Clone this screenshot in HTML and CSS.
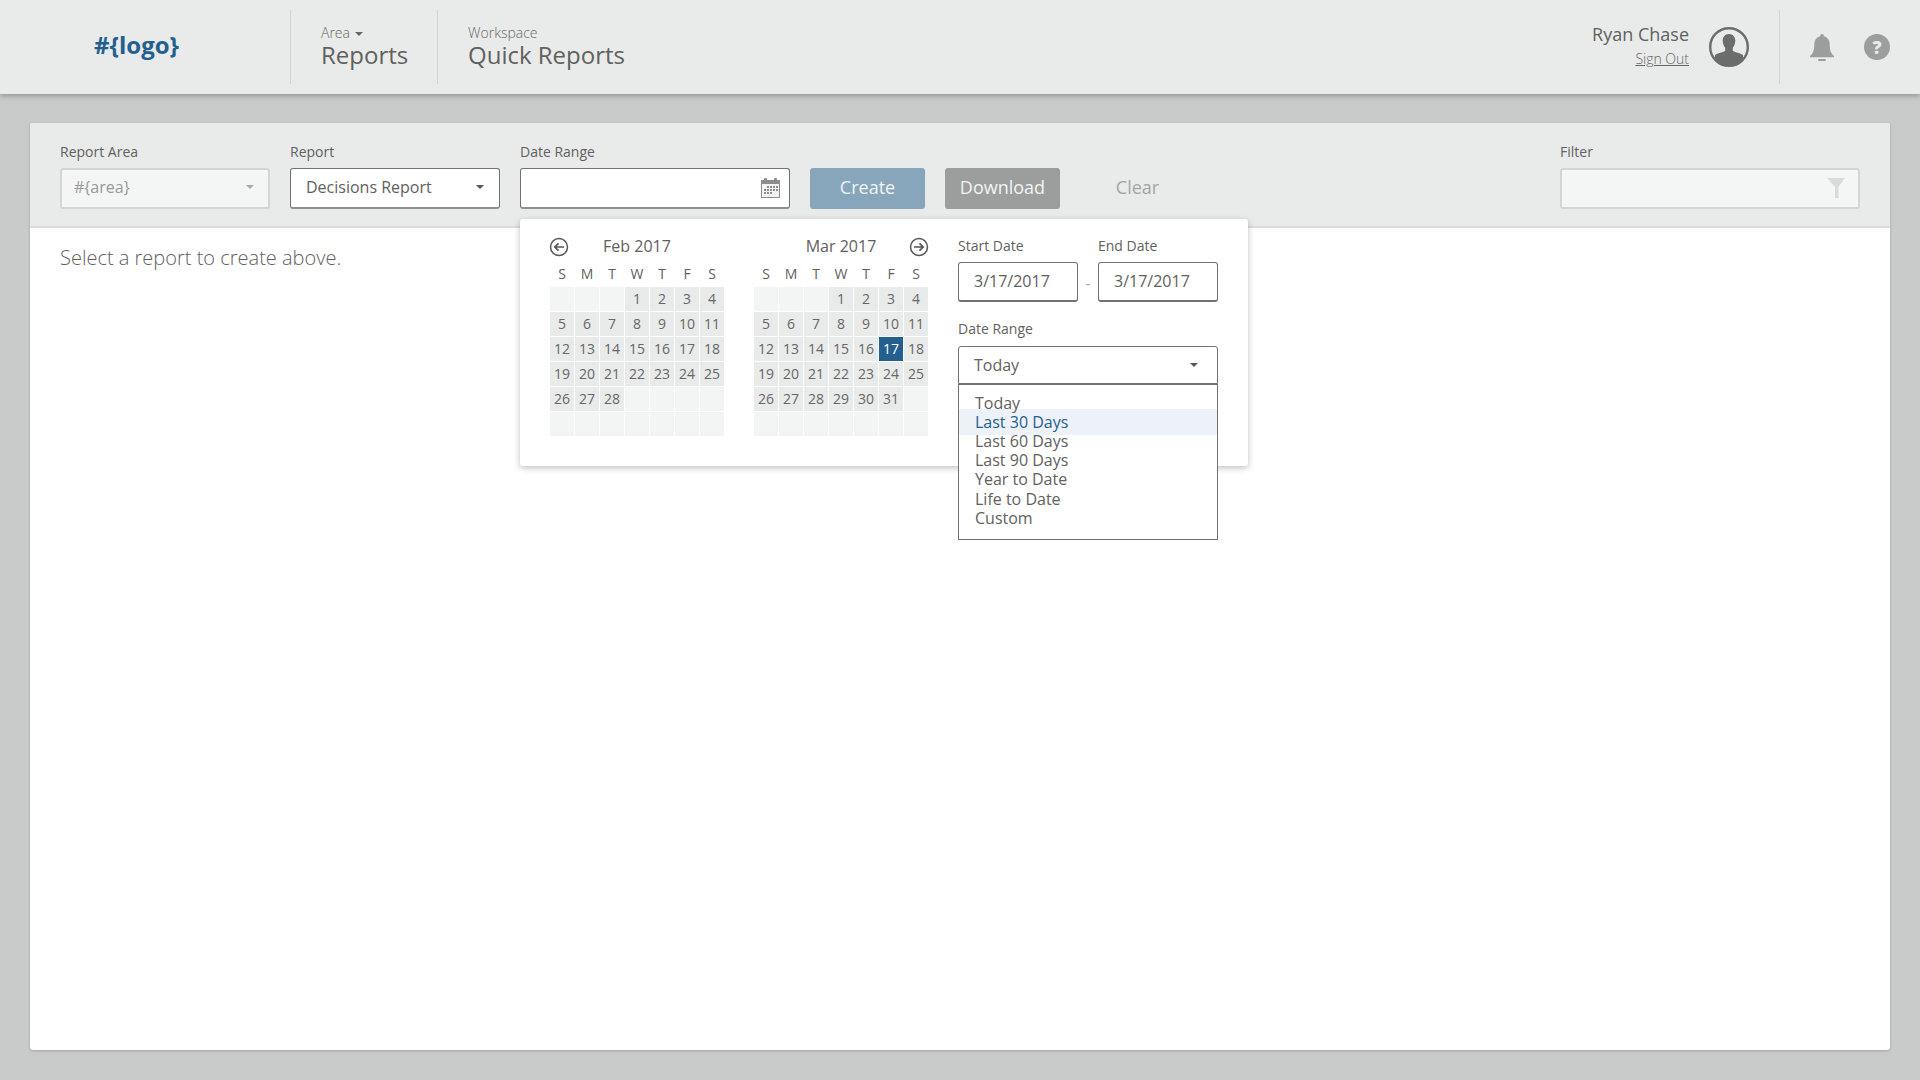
FILE: index.html
```html
<!DOCTYPE html>
<html lang="en">
<head>
    <meta charset="UTF-8">
    <title>Quick Reports</title>
    <link rel="stylesheet" href="styles.css">
</head>
<body>
<header class="topbar">
    <div class="logo">#{logo}</div>
    <div class="crumb crumb-area">
        <div class="crumb-label">Area <span class="caret caret-small"></span></div>
        <div class="crumb-title">Reports</div>
    </div>
    <div class="crumb crumb-workspace">
        <div class="crumb-label">Workspace</div>
        <div class="crumb-title">Quick Reports</div>
    </div>
    <div class="user">
        <div class="user-name">Ryan Chase</div>
        <a class="sign-out" href="#">Sign Out</a>
    </div>
    <svg class="avatar" width="40" height="40" viewBox="0 0 40 40">
        <defs><clipPath id="avatarClip"><circle cx="20" cy="20" r="18.5"/></clipPath></defs>
        <circle cx="20" cy="20" r="18.8" fill="none" stroke="#6b6d6c" stroke-width="2.4"/>
        <g clip-path="url(#avatarClip)" fill="#6b6d6c">
            <path d="M20 7c-3.9 0-6.3 2.9-6.3 6.6 0 2.800 1 5.400 2.500 7.200v2.900c-1.200 1.200-8.200 2.500-10.200 4.300V40h28V28c-2-1.800-9-3.100-10.200-4.300v-2.900c1.500-1.800 2.500-4.400 2.500-7.200C26.300 9.900 23.900 7 20 7z"/>
        </g>
    </svg>
    <div class="top-icons">
        <svg width="24" height="27" viewBox="0 0 24 27">
            <path fill="#9c9e9d" d="M12 0c-1.100 0-1.800.8-1.800 1.800v.5C6.400 3.200 4.300 6.400 4.300 10.500c0 5.800-1.300 8.800-4.300 11.500v1.300h24V22c-3-2.700-4.300-5.700-4.300-11.500 0-4.100-2.100-7.300-5.900-8.200v-.5C13.800.8 13.100 0 12 0z"/>
            <rect x="8" y="25" width="8" height="2" rx="1" fill="#9c9e9d"/>
        </svg>
        <div class="help">?</div>
    </div>
</header>

<main class="page">
    <section class="panel">
        <div class="toolbar">
            <div class="field field-select">
                <label>Report Area</label>
                <div class="control disabled">#{area}<span class="caret"></span></div>
            </div>
            <div class="field field-select">
                <label>Report</label>
                <div class="control">Decisions Report<span class="caret dark"></span></div>
            </div>
            <div class="field field-date">
                <label>Date Range</label>
                <div class="control">
                    <svg class="calendar-icon" width="19" height="20" viewBox="0 0 19 20">
                        <rect x="0" y="2" width="19" height="18" fill="#8c8e8d"/>
                        <rect x="1" y="6" width="17" height="13" fill="#f2f3f3"/>
                        <rect x="3" y="0" width="3" height="4" rx="1" fill="#8c8e8d"/>
                        <rect x="13" y="0" width="3" height="4" rx="1" fill="#8c8e8d"/>
                        <path fill="none" stroke="#8c8e8d" stroke-width="2" stroke-dasharray="2 1" d="M6 9h11M3 12h14M3 15h9"/>
                    </svg>
                </div>
            </div>
            <button class="btn btn-create">Create</button>
            <button class="btn btn-download">Download</button>
            <button class="btn btn-clear">Clear</button>
            <div class="field field-filter">
                <label>Filter</label>
                <div class="control disabled">
                    <svg class="filter-icon" width="18" height="20" viewBox="0 0 18 20">
                        <path fill="#d9dbda" d="M0 0h18l-6.500 9v11H8V9z"/>
                    </svg>
                </div>
            </div>

            <div class="datepicker">
                <div class="month">
                    <div class="month-head">
                        <svg class="month-arrow left" width="20" height="20" viewBox="0 0 20 20">
                            <circle cx="10" cy="10" r="8.500" fill="none" stroke="#555" stroke-width="1.500"/>
                            <path fill="none" stroke="#555" stroke-width="1.700" d="M15 10H6M9.500 6.300 5.800 10l3.700 3.700"/>
                        </svg>
                        Feb 2017
                    </div>
                    <div class="dow"><span>S</span><span>M</span><span>T</span><span>W</span><span>T</span><span>F</span><span>S</span></div>
                    <div class="days">
                        <span></span><span></span><span></span><span class="d">1</span><span class="d">2</span><span class="d">3</span><span class="d">4</span>
                        <span class="d">5</span><span class="d">6</span><span class="d">7</span><span class="d">8</span><span class="d">9</span><span class="d">10</span><span class="d">11</span>
                        <span class="d">12</span><span class="d">13</span><span class="d">14</span><span class="d">15</span><span class="d">16</span><span class="d">17</span><span class="d">18</span>
                        <span class="d">19</span><span class="d">20</span><span class="d">21</span><span class="d">22</span><span class="d">23</span><span class="d">24</span><span class="d">25</span>
                        <span class="d">26</span><span class="d">27</span><span class="d">28</span><span></span><span></span><span></span><span></span>
                        <span></span><span></span><span></span><span></span><span></span><span></span><span></span>
                    </div>
                </div>
                <div class="month">
                    <div class="month-head">
                        Mar 2017
                        <svg class="month-arrow right" width="20" height="20" viewBox="0 0 20 20">
                            <circle cx="10" cy="10" r="8.500" fill="none" stroke="#555" stroke-width="1.500"/>
                            <path fill="none" stroke="#555" stroke-width="1.700" d="M5 10h9M10.500 6.300 14.200 10l-3.700 3.700"/>
                        </svg>
                    </div>
                    <div class="dow"><span>S</span><span>M</span><span>T</span><span>W</span><span>T</span><span>F</span><span>S</span></div>
                    <div class="days">
                        <span></span><span></span><span></span><span class="d">1</span><span class="d">2</span><span class="d">3</span><span class="d">4</span>
                        <span class="d">5</span><span class="d">6</span><span class="d">7</span><span class="d">8</span><span class="d">9</span><span class="d">10</span><span class="d">11</span>
                        <span class="d">12</span><span class="d">13</span><span class="d">14</span><span class="d">15</span><span class="d">16</span><span class="d selected">17</span><span class="d">18</span>
                        <span class="d">19</span><span class="d">20</span><span class="d">21</span><span class="d">22</span><span class="d">23</span><span class="d">24</span><span class="d">25</span>
                        <span class="d">26</span><span class="d">27</span><span class="d">28</span><span class="d">29</span><span class="d">30</span><span class="d">31</span><span></span>
                        <span></span><span></span><span></span><span></span><span></span><span></span><span></span>
                    </div>
                </div>
                <div class="range">
                    <div class="range-dates">
                        <div class="range-field">
                            <label>Start Date</label>
                            <div class="range-input">3/17/2017</div>
                        </div>
                        <span class="range-dash">-</span>
                        <div class="range-field">
                            <label>End Date</label>
                            <div class="range-input">3/17/2017</div>
                        </div>
                    </div>
                    <label class="range-label">Date Range</label>
                    <div class="range-select">Today<span class="caret dark"></span>
                        <ul class="range-menu">
                            <li>Today</li>
                            <li class="active">Last 30 Days</li>
                            <li>Last 60 Days</li>
                            <li>Last 90 Days</li>
                            <li>Year to Date</li>
                            <li>Life to Date</li>
                            <li>Custom</li>
                        </ul>
                    </div>
                </div>
            </div>
        </div>
        <p class="empty">Select a report to create above.</p>
    </section>
</main>
</body>
</html>
```

FILE: styles.css
```css
* {
    box-sizing: border-box;
}

html, body {
    height: 100%;
}

body {
    margin: 0;
    display: flex;
    flex-direction: column;
    height: 1080px;
    overflow: hidden;
    background-color: #c9cbca;
    color: #5f6160;
    font-family: "Open Sans", sans-serif;
}

.topbar {
    display: flex;
    align-items: center;
    height: 94px;
    flex: none;
    background-color: #e9ebea;
    box-shadow: 0 1px 6px rgba(0, 0, 0, 0.35);
    position: relative;
}

.logo {
    width: 290px;
    padding-right: 17px;
    margin-bottom: 5px;
    text-align: center;
    font-size: 24px;
    font-weight: 700;
    color: #23608f;
    line-height: 69px;
}

.crumb {
    height: 74px;
    border-left: 1px solid #d3d5d4;
    padding: 14px 0 0 30px;
}

.crumb-area {
    width: 147px;
}

.crumb-label {
    font-size: 14px;
    font-weight: 300;
    line-height: 18px;
    color: #666;
}

.crumb-title {
    font-size: 24px;
    line-height: 26px;
    color: #5f6160;
}

.user {
    margin-left: auto;
    text-align: right;
    line-height: 1;
}

.user-name {
    font-size: 18px;
    line-height: 22px;
    margin-bottom: 2px;
}

.sign-out {
    font-size: 14px;
    font-weight: 300;
    line-height: 24px;
    color: #666;
}

.avatar {
    margin-left: 20px;
    margin-right: 30px;
}

.top-icons {
    display: flex;
    align-items: center;
    height: 74px;
    width: 141px;
    padding-left: 30px;
    border-left: 1px solid #d3d5d4;
}

.help {
    width: 26px;
    height: 26px;
    margin-left: 30px;
    border-radius: 50%;
    background-color: #9c9e9d;
    color: #e9ebea;
    font-size: 18px;
    font-weight: 800;
    line-height: 26px;
    text-align: center;
}

.caret {
    display: inline-block;
    border-left: 4px solid transparent;
    border-right: 4px solid transparent;
    border-top: 4px solid #aaa;
}

.caret.dark {
    border-top-color: #555;
}

.caret-small {
    border-top-color: #666;
    margin-left: 1px;
    vertical-align: 2px;
}

.page {
    flex: 1;
    padding: 29px 30px 30px;
}

.panel {
    height: 100%;
    background: white;
    border-radius: 3px;
    box-shadow: 0 1px 3px rgba(0, 0, 0, 0.2);
}

.toolbar {
    position: relative;
    display: flex;
    align-items: flex-end;
    gap: 20px;
    height: 105px;
    padding: 0 30px 17px;
    background-color: #e9ebea;
    border-bottom: 2px solid #dcdedd;
    border-radius: 3px 3px 0 0;
}

label {
    display: block;
    font-size: 14px;
    line-height: 19px;
    color: #5f6160;
}

.field label {
    margin-bottom: 7px;
}

.control {
    position: relative;
    display: flex;
    align-items: center;
    justify-content: space-between;
    height: 41px;
    padding: 0 15px 3px;
    background: white;
    border: 1px solid #707271;
    border-bottom: 2px solid #8f9190;
    border-radius: 3px;
    font-size: 16px;
    color: #5f6160;
}

.control.disabled {
    padding: 0 14px 3px 12px;
    background-color: #f4f5f5;
    border: 2px solid #d3d5d4;
    color: #999;
}

.field-select {
    width: 210px;
}

.field-date {
    width: 270px;
}

.field-filter {
    width: 300px;
    margin-left: auto;
}

.calendar-icon {
    position: absolute;
    right: 9px;
    top: 9px;
}

.filter-icon {
    position: absolute;
    right: 13px;
    top: 8px;
}

.btn {
    width: 115px;
    height: 41px;
    padding: 0 0 3px;
    border: none;
    border-radius: 3px;
    font-family: inherit;
    font-size: 18px;
    color: #f2f4f3;
}

.btn-create {
    background-color: #87a6bc;
}

.btn-download {
    background-color: #9c9e9d;
}

.btn-clear {
    background: none;
    color: #a3a5a4;
}

.datepicker {
    position: absolute;
    left: 490px;
    top: 96px;
    width: 728px;
    height: 247px;
    display: flex;
    padding: 17px 30px 0;
    gap: 30px;
    background: white;
    border-radius: 3px;
    box-shadow: 0 2px 6px rgba(0, 0, 0, 0.25);
    z-index: 5;
}

.month {
    width: 174px;
}

.month-head {
    position: relative;
    height: 20px;
    text-align: center;
    font-size: 16px;
    line-height: 20px;
}

.month-arrow {
    position: absolute;
    top: 1px;
}

.month-arrow.left {
    left: -1px;
}

.month-arrow.right {
    right: -1px;
}

.dow, .days {
    display: grid;
    grid-template-columns: repeat(7, 24px);
    column-gap: 1px;
}

.dow {
    height: 30px;
    padding-top: 6px;
    margin-bottom: 1px;
    text-align: center;
    font-size: 14px;
    line-height: 24px;
}

.days {
    grid-auto-rows: 24px;
    row-gap: 1px;
    font-size: 14px;
    line-height: 24px;
    text-align: center;
    color: #666;
}

.days span {
    background-color: #f3f5f4;
}

.days .d {
    background-color: #e9ebea;
}

.days .selected {
    background-color: #23608f;
    color: white;
}

.range {
    width: 260px;
}

.range-dates {
    display: flex;
    align-items: flex-end;
}

.range-field {
    width: 120px;
}

.range-field label {
    line-height: 20px;
    margin-bottom: 6px;
}

.range-input {
    height: 40px;
    padding-left: 15px;
    border: 1px solid #707271;
    border-bottom-width: 2px;
    border-radius: 3px;
    font-size: 16px;
    line-height: 36px;
}

.range-dash {
    width: 20px;
    text-align: center;
    line-height: 38px;
    color: #aaa;
}

.range-label {
    margin-top: 17px;
    margin-bottom: 8px;
}

.range-select {
    position: relative;
    display: flex;
    align-items: center;
    justify-content: space-between;
    height: 38px;
    padding: 0 19px 1px 15px;
    border: 1px solid #707271;
    border-radius: 3px 3px 0 0;
    font-size: 16px;
}

.range-menu {
    position: absolute;
    left: -1px;
    right: -1px;
    top: 37px;
    margin: 0;
    padding: 8.5px 0 0;
    height: 156px;
    list-style: none;
    background: white;
    border: 1px solid #707271;
    font-size: 16px;
    line-height: 19.2px;
}

.range-menu li {
    padding-left: 16px;
}

.range-menu .active {
    margin: -3.5px 0;
    padding-top: 3.5px;
    padding-bottom: 3.5px;
    background-color: #edf1f8;
    color: #23608f;
}

.empty {
    margin: 0;
    padding: 16px 30px;
    font-size: 20px;
    font-weight: 300;
    line-height: 27px;
    color: #5f6160;
}
```
